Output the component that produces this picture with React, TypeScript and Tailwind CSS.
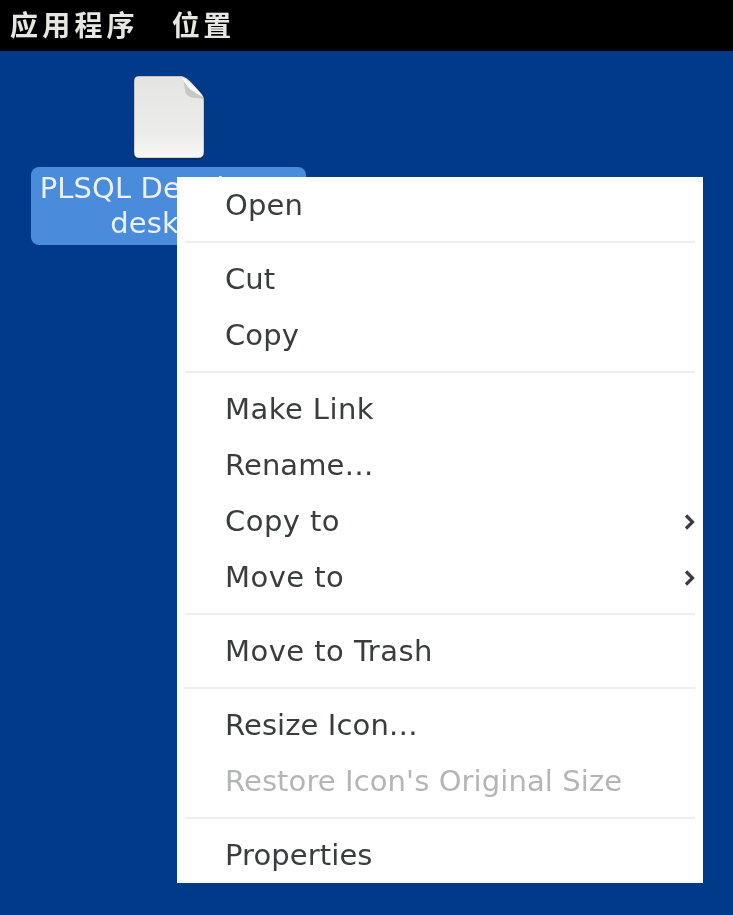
const sans = 'font-["DejaVu_Sans","Noto_Sans_CJK_SC",sans-serif]';

const Separator = () => (
  <div className="h-[18px] pt-2 px-2">
    <div className="h-0.5 bg-[#eeeeec]" />
  </div>
);

const MenuItem = ({
  label,
  disabled,
  submenu,
  wide,
}: {
  label: string;
  disabled?: boolean;
  submenu?: boolean;
  wide?: boolean;
}) => (
  <div
    className={`h-14 flex items-center justify-between pl-[48px] pr-[6px] pt-0.5 text-[29px] ${
      wide ? 'tracking-[0.45px]' : 'tracking-[0.1px]'
    } ${disabled ? 'text-[#b4b6b5]' : 'text-[#3a3d3d]'}`}
  >
    <span>{label}</span>
    {submenu && (
      <svg width="14" height="18" viewBox="0 0 14 18" fill="none" stroke="#3a3d3d" strokeWidth="3.2">
        <path d="M3 2.5 9.5 9 3 15.5" />
      </svg>
    )}
  </div>
);

const FileIcon = () => (
  <svg width="74" height="86" viewBox="0 0 74 86" className="block">
    <defs>
      <linearGradient id="page" x1="0" y1="0" x2="0" y2="1">
        <stop offset="0" stopColor="#e4e5e3" />
        <stop offset="0.7" stopColor="#ecedeb" />
        <stop offset="1" stopColor="#f7f7f6" />
      </linearGradient>
    </defs>
    <path d="M2 40H72V80Q72 86 67 86H7Q2 86 2 80Z" fill="#001a40" fillOpacity="0.35" />
    <path
      d="M7 2H50Q54 3 58 7L68 18Q72 22 72 26V78Q72 84 66 84H7Q2 84 2 78V7Q2 2 7 2Z"
      fill="url(#page)"
      stroke="#2a2a28"
      strokeOpacity="0.35"
      strokeWidth="1"
    />
    <path d="M50 3C53 8 52 18 55 21C60 25 68 24 72 25C68 18 58 8 50 3Z" fill="#c6c7c4" />
    <path d="M50 3C52 10 58 17 71 23C67 16 58 8 50 3Z" fill="#fbfbfa" />
  </svg>
);

export default function App() {
  return (
    <div className={`relative w-[733px] h-[915px] overflow-hidden bg-[#003a88] blur-[0.4px] ${sans}`}>
      <div className="h-[51px] bg-black flex items-center pl-2.5 pt-0.5 gap-[33px] text-[28px] font-bold text-[#e6e6e2]">
        <span className="tracking-[4.2px]">应用程序</span>
        <span className="tracking-[3.5px]">位置</span>
      </div>

      {/* desktop icon */}
      <div className="absolute left-[31px] top-[74px] w-[275px] flex flex-col items-center">
        <FileIcon />
        <div className="mt-[7px] w-full h-[78px] rounded-lg bg-[#4a8bdb] text-[#e9f1fb] text-[29px] tracking-[0.1px] leading-[35px] text-center pt-1">
          PLSQL Developer.
          <br />
          desktop
        </div>
      </div>

      {/* context menu */}
      <div className="absolute left-[177px] top-[177px] w-[526px] bg-white">
        <MenuItem label="Open" />
        <Separator />
        <MenuItem label="Cut" />
        <MenuItem label="Copy" />
        <Separator />
        <MenuItem label="Make Link" wide />
        <MenuItem label="Rename…" />
        <MenuItem label="Copy to" wide submenu />
        <MenuItem label="Move to" wide submenu />
        <Separator />
        <MenuItem label="Move to Trash" wide />
        <Separator />
        <MenuItem label="Resize Icon…" />
        <MenuItem label="Restore Icon's Original Size" disabled />
        <Separator />
        <MenuItem label="Properties" />
      </div>
    </div>
  );
}
